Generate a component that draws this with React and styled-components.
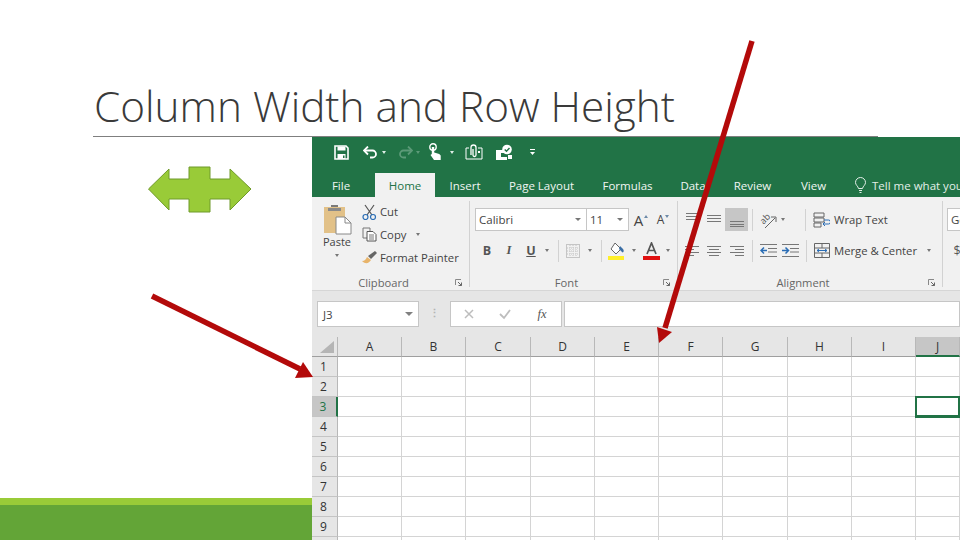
import React from 'react';
import styled, { createGlobalStyle } from 'styled-components';

const GlobalStyle = createGlobalStyle`
  html, body { margin: 0; padding: 0; background: #fff; }
  body { font-family: "Open Sans", "Liberation Sans", sans-serif; }
`;

const Page = styled.div`
  position: relative;
  width: 960px;
  height: 540px;
  overflow: hidden;
  background: #fff;
  display: flex;
  flex-direction: column;
`;

const TitleBar = styled.header`
  height: 137px;
  box-sizing: border-box;
  margin: 0 82px 0 93px;
  border-bottom: 1px solid #7f7f7f;
  display: flex;
  align-items: flex-end;
  flex-shrink: 0;
`;

const Title = styled.h1`
  margin: 0 0 2px 1px;
  font-weight: 300;
  font-size: 42.3px;
  line-height: 56px;
  color: #3a3a3a;
  white-space: nowrap;
`;

const Body = styled.div`
  flex: 1;
  display: flex;
  min-height: 0;
`;

const LeftPane = styled.div`
  width: 312px;
  display: flex;
  flex-direction: column;
  flex-shrink: 0;
`;

const ShapeWrap = styled.div`
  margin: 29px 0 0 147px;
  line-height: 0;
`;

const FooterBand = styled.div`
  margin-top: auto;
  height: 35px;
  background: #63a537;
  border-top: 7px solid #99cb38;
`;

const Excel = styled.div`
  width: 648px;
  display: flex;
  flex-direction: column;
  overflow: hidden;
`;

const Qat = styled.div`
  height: 36px;
  box-sizing: border-box;
  background: #217346;
  display: flex;
  align-items: center;
  padding: 0 0 6px 21px;
  flex-shrink: 0;
`;

const QatSlot = styled.span`
  width: ${(p) => p.$w}px;
  height: 20px;
  margin-left: ${(p) => p.$ml || 0}px;
  display: flex;
  align-items: center;
  justify-content: center;
  flex-shrink: 0;
`;

const Tabs = styled.div`
  height: 24px;
  background: #217346;
  display: flex;
  flex-shrink: 0;
`;

const Tab = styled.div`
  width: ${(p) => p.$w}px;
  margin-right: ${(p) => p.$mr || 0}px;
  display: flex;
  align-items: center;
  justify-content: center;
  flex-shrink: 0;
  font-size: 11.5px;
  color: ${(p) => (p.$active ? '#217346' : '#f1f6f3')};
  background: ${(p) => (p.$active ? '#f1f1f1' : 'transparent')};
`;

const TellMe = styled.div`
  display: flex;
  align-items: center;
  margin-left: 13px;
  gap: 5px;
  font-size: 11.5px;
  color: #e3efe8;
  white-space: nowrap;
  flex-shrink: 0;
`;

const Ribbon = styled.div`
  height: 94px;
  box-sizing: border-box;
  background: #f1f1f1;
  border-bottom: 1px solid #d6d6d6;
  padding-top: 4px;
  display: flex;
  flex-shrink: 0;
  overflow: hidden;
`;

const Group = styled.section`
  width: ${(p) => p.$w}px;
  height: 86px;
  box-sizing: border-box;
  border-right: 1px solid #d2d2d2;
  display: flex;
  flex-direction: column;
  flex-shrink: 0;
`;

const GroupMain = styled.div`
  flex: 1;
  display: flex;
  min-height: 0;
`;

const Rows = styled.div`
  display: flex;
  flex-direction: column;
  gap: 8px;
  padding: 7px 0 0 ${(p) => p.$pl || 0}px;
`;

const ToolRow = styled.div`
  height: 23px;
  display: flex;
  align-items: center;
`;

const GroupFoot = styled.div`
  height: 14px;
  margin-bottom: -2px;
  display: flex;
  align-items: center;
  color: #666;
  font-size: 11.2px;
`;

const GroupName = styled.span`
  flex: 1;
  text-align: center;
`;

const Launcher = styled.span`
  width: 14px;
  line-height: 0;
`;

const PasteCol = styled.div`
  width: 50px;
  display: flex;
  flex-direction: column;
  align-items: center;
  font-size: 11px;
  color: #444;
  padding-top: 3px;
  line-height: 14px;
`;

const ClipList = styled.div`
  display: flex;
  flex-direction: column;
  margin-top: -1px;
`;

const ClipItem = styled.div`
  height: 23px;
  display: flex;
  align-items: center;
  font-size: 11.3px;
  color: #444;
  white-space: nowrap;
`;

const ClipIcon = styled.span`
  width: 18px;
  display: flex;
  justify-content: flex-start;
`;

const Combo = styled.div`
  width: ${(p) => p.$w}px;
  height: 23px;
  box-sizing: border-box;
  background: #fff;
  border: 1px solid #c6c6c6;
  margin-left: -1px;
  padding: 0 5px 0 3px;
  display: flex;
  align-items: center;
  justify-content: space-between;
  font-size: 11.5px;
  color: #444;
  flex-shrink: 0;
`;

const Slot = styled.span`
  width: ${(p) => p.$w}px;
  height: 23px;
  margin-left: ${(p) => p.$ml || 0}px;
  display: flex;
  align-items: center;
  justify-content: center;
  flex-shrink: 0;
  background: ${(p) => (p.$on ? '#c6c6c6' : 'transparent')};
  color: #555;
  font-size: 12.5px;
  font-weight: ${(p) => (p.$bold ? 700 : 400)};
  font-style: ${(p) => (p.$italic ? 'italic' : 'normal')};
  text-decoration: ${(p) => (p.$under ? 'underline' : 'none')};
  font-family: ${(p) => (p.$serif ? '"Liberation Serif", serif' : 'inherit')};
`;

const Caret = styled.span`
  width: 0;
  height: 0;
  margin: 0 ${(p) => p.$m ?? 2}px;
  border-left: ${(p) => p.$size ?? 2.5}px solid transparent;
  border-right: ${(p) => p.$size ?? 2.5}px solid transparent;
  border-top: ${(p) => (p.$size ?? 2.5) + 0.5}px solid ${(p) => p.$color || '#777'};
  flex-shrink: 0;
`;

const Sep = styled.span`
  width: 1px;
  height: 22px;
  margin-left: ${(p) => p.$ml || 0}px;
  background: #d2d2d2;
  flex-shrink: 0;
`;

const WideButton = styled.div`
  margin-left: 7px;
  display: flex;
  align-items: center;
  gap: 4px;
  font-size: 11.3px;
  color: #444;
  white-space: nowrap;
`;

const SizeLetter = styled.span`
  font-size: ${(p) => p.$size}px;
  color: #444;
`;

const SizeMark = styled.span`
  width: 0;
  height: 0;
  margin: 0 0 7px 1px;
  border-left: 2.5px solid transparent;
  border-right: 2.5px solid transparent;
  border-bottom: ${(p) => (p.$down ? '0' : '3px solid #6d8aa8')};
  border-top: ${(p) => (p.$down ? '3px solid #6d8aa8' : '0')};
`;

const FormulaBar = styled.div`
  height: 46px;
  box-sizing: border-box;
  background: #e6e6e6;
  padding: 10px 0 10px 5px;
  display: flex;
  flex-shrink: 0;
`;

const BarBox = styled.div`
  width: ${(p) => (p.$w ? `${p.$w}px` : 'auto')};
  flex: ${(p) => (p.$w ? '0 0 auto' : '1')};
  margin-left: ${(p) => p.$ml || 0}px;
  box-sizing: border-box;
  background: #fff;
  border: 1px solid #c6c6c6;
  display: flex;
  align-items: center;
  justify-content: space-between;
  padding: 0 ${(p) => p.$pr || 0}px 0 ${(p) => p.$pl || 0}px;
  font-size: 11.5px;
  color: #444;
`;

const Dots = styled.span`
  width: 31px;
  text-align: center;
  color: #b4b4b4;
  font-size: 11px;
  line-height: 24px;
  font-weight: 700;
`;

const Sheet = styled.div`
  display: grid;
  grid-template-columns: 26px 64px 64px 65px 64px 64px 64px 65px 64px 64px 1fr;
  grid-auto-rows: 20px;
  flex: 1;
  min-height: 0;
`;

const Corner = styled.div`
  background: #e6e6e6;
  border-right: 1px solid #b8b8b8;
  border-bottom: 1px solid #9f9f9f;
  box-sizing: border-box;
  display: flex;
  align-items: flex-end;
  justify-content: flex-end;
  padding: 0 3px 3px 0;
`;

const ColHead = styled.div`
  box-sizing: border-box;
  background: ${(p) => (p.$on ? '#c6c6c6' : '#e6e6e6')};
  border-right: 1px solid #b8b8b8;
  border-bottom: ${(p) => (p.$on ? '2px solid #217346' : '1px solid #9f9f9f')};
  display: flex;
  align-items: center;
  justify-content: center;
  font-size: 12px;
  color: #333;
`;

const RowHead = styled.div`
  box-sizing: border-box;
  background: ${(p) => (p.$on ? '#c6c6c6' : '#e6e6e6')};
  border-right: ${(p) => (p.$on ? '2px solid #217346' : '1px solid #b8b8b8')};
  border-bottom: 1px solid #c4c4c4;
  display: flex;
  align-items: center;
  justify-content: center;
  padding-right: 2px;
  font-size: 12px;
  color: ${(p) => (p.$on ? '#217346' : '#333')};
`;

const Cell = styled.div`
  position: relative;
  z-index: ${(p) => (p.$on ? 1 : 0)};
  box-sizing: border-box;
  background: #fff;
  border-right: 1px solid ${(p) => (p.$on ? '#217346' : '#d4d4d4')};
  border-bottom: 1px solid ${(p) => (p.$on ? '#217346' : '#d4d4d4')};
  box-shadow: ${(p) => (p.$on ? 'inset 0 0 0 1px #217346, 0 0 0 1px #217346' : 'none')};
`;

const ArrowLayer = styled.svg`
  position: absolute;
  inset: 0;
  z-index: 2;
  pointer-events: none;
`;

const columns = ['A', 'B', 'C', 'D', 'E', 'F', 'G', 'H', 'I', 'J'];
const rows = [1, 2, 3, 4, 5, 6, 7, 8, 9, 10];

const Svg = ({ w = 16, h = 16, children, ...rest }) => (
  <svg width={w} height={h} viewBox={`0 0 ${w} ${h}`} fill="none" {...rest}>
    {children}
  </svg>
);

// alignment glyph, rows is a list of [x1, x2, y]
const Lines = ({ rows: lines, color = '#777' }) => (
  <Svg w={16} h={14}>
    {lines.map(([a, b, y]) => (
      <path key={`${a}-${y}`} d={`M${a} ${y + 0.5}H${b}`} stroke={color} />
    ))}
  </Svg>
);

const SaveIcon = () => (
  <Svg w={15} h={15}>
    <path d="M1 1h11l2 2v11H1z" stroke="#fff" strokeWidth="1.6" />
    <path d="M3.500 1.500h8v4h-8z" fill="#fff" />
    <path d="M3.500 9h8v5h-8z" fill="#fff" />
    <path d="M9 10.500h1.500V13H9z" fill="#217346" />
  </Svg>
);

const UndoIcon = ({ flip, color = '#fff' }) => (
  <Svg w={15} h={13} style={flip ? { transform: 'scaleX(-1)' } : undefined}>
    <path d="M1.500 4.500h8a3.500 3.500 0 0 1 0 7H7" stroke={color} strokeWidth="1.800" />
    <path d="M5 .5 1 4.500l4 4" stroke={color} strokeWidth="1.800" />
  </Svg>
);

const TouchIcon = () => (
  <Svg w={14} h={18}>
    <circle cx="5" cy="4" r="3.200" stroke="#fff" strokeWidth="1.400" />
    <path d="M3.800 4h2.400v5.500l5 1.500 1.500 1.500V17H6l-3.500-5 1.300-1z" fill="#fff" />
  </Svg>
);

const AttachIcon = () => (
  <Svg w={18} h={16}>
    <path d="M4 4H1v11h16V4h-4" stroke="#fff" />
    <path d="M6 11V3.500a2.500 2.500 0 0 1 5 0V11a1.500 1.500 0 0 1-3 0V5" stroke="#fff" strokeWidth="1.300" />
    <path d="M13 7h2v2h-2z" fill="#fff" />
  </Svg>
);

const ReviewIcon = () => (
  <Svg w={18} h={17}>
    <path d="M1 6h8v3H6v4h6v3H1z" fill="#fff" />
    <circle cx="12" cy="5.500" r="4.800" fill="#fff" />
    <path d="m9.700 5.500 1.800 1.800 3-3.300" stroke="#217346" strokeWidth="1.400" />
    <path d="M13 11h4v4h-4z" fill="#fff" />
  </Svg>
);

const CustomizeIcon = () => (
  <Svg w={7} h={8}>
    <path d="M1 1.500h5" stroke="#fff" />
    <path d="M1 4h5L3.500 7z" fill="#fff" />
  </Svg>
);

const BulbIcon = () => (
  <Svg w={13} h={16}>
    <path d="M4.500 11.500C4 9 1.500 8 1.500 5.500a5 5 0 0 1 10 0c0 2.500-2.500 3.500-3 6z" stroke="#e3efe8" />
    <path d="M5 13.500h3M5.500 15.500h2" stroke="#e3efe8" />
  </Svg>
);

const PasteIcon = () => (
  <Svg w={29} h={31}>
    <path d="M1 3h21v26H1z" fill="#e2c188" />
    <path d="M8 3h7V1H8z" fill="#7a7a7a" />
    <path d="M5 4h13v3H5z" fill="#8a8a8a" />
    <path d="M13 13h9l6 6v11H13z" fill="#fff" stroke="#888" />
    <path d="M22 13v6h6" stroke="#888" />
  </Svg>
);

const ScissorsIcon = () => (
  <Svg w={15} h={16}>
    <path d="M3 1l7 10M12 1 5 11" stroke="#555" strokeWidth="1.200" />
    <circle cx="3.500" cy="13" r="2.500" stroke="#2a6db5" strokeWidth="1.200" />
    <circle cx="11" cy="13" r="2.500" stroke="#2a6db5" strokeWidth="1.200" />
  </Svg>
);

const CopyIcon = () => (
  <Svg w={15} h={15}>
    <path d="M1 1h7v10H1z" fill="#f1f1f1" stroke="#777" />
    <path d="M5 4.500h6l3 3V14H5z" fill="#fff" stroke="#555" />
    <path d="M7 8h5M7 10h5M7 12h5" stroke="#777" />
  </Svg>
);

const BrushIcon = () => (
  <Svg w={16} h={14}>
    <path d="M0 10c3 0 4-2 5-4l4 3c-2 3-5 5-9 1z" fill="#e8b46a" />
    <path d="m6 5 3 3 6-6-2-2z" fill="#666" />
  </Svg>
);

const BordersIcon = () => (
  <Svg w={14} h={14}>
    <path d="M.5.5h13v13H.5z" stroke="#999" strokeDasharray="1 1" />
    <path d="M7 1v12M1 7h12M4 1v12M10 1v12M1 4h12M1 10h12" stroke="#c4c4c4" strokeDasharray="1 1" />
  </Svg>
);

const FillIcon = () => (
  <Svg w={17} h={18}>
    <path d="m7 1 6 6-5 5-5-5z" fill="#fff" stroke="#666" />
    <path d="M12 4l3 3c1 1 1 3-.5 3.500L11 7z" fill="#3a6ea5" />
    <path d="M0 14h16v4H0z" fill="#ffef2a" />
  </Svg>
);

const FontColorIcon = () => (
  <Svg w={17} h={18}>
    <path d="M0 14h17v4H0z" fill="#e01010" />
    <path d="m4 12 4.500-11L13 12M5.500 8.500h6" stroke="#555" strokeWidth="1.700" />
  </Svg>
);

const OrientIcon = () => (
  <Svg w={22} h={20} style={{ overflow: 'visible' }}>
    <text x="3" y="12" fontSize="9" fontFamily="Open Sans, sans-serif" fill="#555" transform="rotate(-45 8 9)">
      ab
    </text>
    <path d="M8 18 18 8M14 7h5v5" stroke="#666" />
  </Svg>
);

const WrapIcon = () => (
  <Svg w={17} h={16}>
    <path d="M1 1h10v4H1zM1 6h10v4H1zM1 11h7v4H1z" stroke="#666" />
    <path d="M11 8h4.500a1 1 0 0 1 0 4H10" stroke="#2a6db5" />
    <path d="M12 10 10 12l2 2" stroke="#2a6db5" />
  </Svg>
);

const MergeIcon = () => (
  <Svg w={16} h={15}>
    <path d="M.5.5h15v14H.5zM.5 5h15M.5 10h15M8 .5V5M8 10v4.500" stroke="#666" />
    <path d="M3 7.500h10M5 6 3 7.500 5 9M11 6l2 1.500L11 9" stroke="#2a6db5" />
  </Svg>
);

const IndentIcon = ({ out }) => (
  <Svg w={17} h={13}>
    <path d="M0 .5h17M8 4.500h9M8 8h9M0 12.500h17" stroke="#777" />
    <path
      d={out ? 'M1 6.500h6M4 3.500l-3 3 3 3' : 'M0 6.500h6M3.500 3.500l3 3-3 3'}
      stroke="#2a6db5"
      strokeWidth="1.500"
    />
  </Svg>
);

const LauncherIcon = () => (
  <Svg w={7} h={7}>
    <path d="M.5 6V.5H6" stroke="#888" />
    <path d="m3 3 3.500 3.500M6.500 3.500v3h-3" stroke="#666" />
  </Svg>
);

const ShapeIcon = () => (
  <svg width="105" height="48" viewBox="0 0 105 48">
    <path
      d="M1.500 23 22 3v10h20V1h21v12h20V3l21 20-21 21V33H63v13H42V33H22v11z"
      fill="#99cb38"
      stroke="#6f9a2a"
    />
  </svg>
);

const App = () => (
  <Page>
    <GlobalStyle />
    <TitleBar>
      <Title>Column Width and Row Height</Title>
    </TitleBar>
    <Body>
      <LeftPane>
        <ShapeWrap>
          <ShapeIcon />
        </ShapeWrap>
        <FooterBand />
      </LeftPane>
      <Excel>
        <Qat>
          <QatSlot $w={16}><SaveIcon /></QatSlot>
          <QatSlot $w={16} $ml={13}><UndoIcon /></QatSlot>
          <QatSlot $w={5} $ml={3.5}><Caret $m={0} $color="#dfeee6" /></QatSlot>
          <QatSlot $w={16} $ml={10.5}><UndoIcon flip color="#5c9a78" /></QatSlot>
          <QatSlot $w={5} $ml={2.5}><Caret $m={0} $color="#5c9a78" /></QatSlot>
          <QatSlot $w={14} $ml={7.5}><TouchIcon /></QatSlot>
          <QatSlot $w={5} $ml={7.5}><Caret $m={0} $color="#dfeee6" /></QatSlot>
          <QatSlot $w={18} $ml={10.5}><AttachIcon /></QatSlot>
          <QatSlot $w={18} $ml={12}><ReviewIcon /></QatSlot>
          <QatSlot $w={7} $ml={15.5}><CustomizeIcon /></QatSlot>
        </Qat>
        <Tabs>
          <Tab $w={58} $mr={5}>File</Tab>
          <Tab $w={60} $active>Home</Tab>
          <Tab $w={60}>Insert</Tab>
          <Tab $w={93}>Page Layout</Tab>
          <Tab $w={79}>Formulas</Tab>
          <Tab $w={52}>Data</Tab>
          <Tab $w={67}>Review</Tab>
          <Tab $w={55}>View</Tab>
          <TellMe><BulbIcon />Tell me what you want to do</TellMe>
        </Tabs>
        <Ribbon>
          <Group $w={158}>
            <GroupMain>
              <PasteCol>
                <PasteIcon />
                <span>Paste</span>
                <Caret style={{ marginTop: 5 }} />
              </PasteCol>
              <ClipList>
                <ClipItem><ClipIcon><ScissorsIcon /></ClipIcon>Cut</ClipItem>
                <ClipItem><ClipIcon><CopyIcon /></ClipIcon>Copy<Caret $m={10} /></ClipItem>
                <ClipItem><ClipIcon><BrushIcon /></ClipIcon>Format Painter</ClipItem>
              </ClipList>
            </GroupMain>
            <GroupFoot>
              <GroupName>Clipboard</GroupName>
              <Launcher><LauncherIcon /></Launcher>
            </GroupFoot>
          </Group>
          <Group $w={208}>
            <GroupMain>
              <Rows $pl={6}>
                <ToolRow>
                  <Combo $w={112}>Calibri<Caret $m={0} $size={3} /></Combo>
                  <Combo $w={43}>11<Caret $m={0} $size={3} /></Combo>
                  <Slot $w={22} $ml={1}><SizeLetter $size={15}>A</SizeLetter><SizeMark /></Slot>
                  <Slot $w={22}><SizeLetter $size={12}>A</SizeLetter><SizeMark $down /></Slot>
                </ToolRow>
                <ToolRow>
                  <Slot $w={22} $bold>B</Slot>
                  <Slot $w={22} $italic $bold $serif>I</Slot>
                  <Slot $w={22} $under $bold>U</Slot>
                  <Slot $w={10}><Caret $m={0} /></Slot>
                  <Sep $ml={6} />
                  <Slot $w={27}><BordersIcon /></Slot>
                  <Slot $w={8}><Caret $m={0} /></Slot>
                  <Sep $ml={7} />
                  <Slot $w={28}><FillIcon /></Slot>
                  <Slot $w={8}><Caret $m={0} /></Slot>
                  <Slot $w={26}><FontColorIcon /></Slot>
                  <Slot $w={8}><Caret $m={0} /></Slot>
                </ToolRow>
              </Rows>
            </GroupMain>
            <GroupFoot>
              <GroupName>Font</GroupName>
              <Launcher><LauncherIcon /></Launcher>
            </GroupFoot>
          </Group>
          <Group $w={265}>
            <GroupMain>
              <Rows $pl={3}>
                <ToolRow>
                  <Slot $w={22}><Lines rows={[[2, 14, 0], [2, 14, 3], [2, 14, 6]]} /></Slot>
                  <Slot $w={22}><Lines rows={[[1, 15, 2], [1, 15, 5], [1, 15, 8]]} /></Slot>
                  <Slot $w={23} $on><Lines rows={[[1, 15, 8], [1, 15, 11], [1, 15, 13]]} /></Slot>
                  <Sep $ml={4} />
                  <Slot $w={26} $ml={2}><OrientIcon /></Slot>
                  <Caret $m={0} />
                  <Sep $ml={20} />
                  <WideButton><WrapIcon />Wrap Text</WideButton>
                </ToolRow>
                <ToolRow>
                  <Slot $w={22}><Lines rows={[[1, 15, 2], [1, 10, 5], [1, 15, 8], [1, 10, 11]]} /></Slot>
                  <Slot $w={22}><Lines rows={[[1, 15, 2], [3, 13, 5], [1, 15, 8], [3, 13, 11]]} /></Slot>
                  <Slot $w={23}><Lines rows={[[1, 15, 2], [6, 15, 5], [1, 15, 8], [6, 15, 11]]} /></Slot>
                  <Sep $ml={4} />
                  <Slot $w={22} $ml={4}><IndentIcon out /></Slot>
                  <Slot $w={22}><IndentIcon /></Slot>
                  <Sep $ml={5} />
                  <WideButton><MergeIcon />Merge &amp; Center<Caret $m={6} /></WideButton>
                </ToolRow>
              </Rows>
            </GroupMain>
            <GroupFoot>
              <GroupName>Alignment</GroupName>
              <Launcher><LauncherIcon /></Launcher>
            </GroupFoot>
          </Group>
          <Rows $pl={5}>
            <ToolRow><Combo $w={60}>General</Combo></ToolRow>
            <ToolRow><Slot $w={14} $ml={2}>$</Slot></ToolRow>
          </Rows>
        </Ribbon>
        <FormulaBar>
          <BarBox $w={102} $pl={5} $pr={5}>J3<Caret $m={0} $size={4} $color="#808080" /></BarBox>
          <Dots>⋮</Dots>
          <BarBox $w={112} $pl={12} $pr={12}>
            <Svg w={12} h={12}><path d="m2 2 8 8M10 2l-8 8" stroke="#bdbdbd" strokeWidth="1.500" /></Svg>
            <Svg w={14} h={12}><path d="m2 6 4 4 6-8" stroke="#bdbdbd" strokeWidth="1.800" /></Svg>
            <Slot $w={14} $italic $serif>fx</Slot>
          </BarBox>
          <BarBox $ml={2} />
        </FormulaBar>
        <Sheet>
          <Corner>
            <Svg w={14} h={12}><path d="M14 0v12H0z" fill="#b5b5b5" /></Svg>
          </Corner>
          {columns.map((c) => (
            <ColHead key={c} $on={c === 'J'}>{c}</ColHead>
          ))}
          {rows.map((r) => (
            <React.Fragment key={r}>
              {/* row 10 sits below the fold, only its top edge shows */}
              <RowHead $on={r === 3}>{r < 10 ? r : ''}</RowHead>
              {columns.map((c) => (
                <Cell key={c} $on={r === 3 && c === 'J'} />
              ))}
            </React.Fragment>
          ))}
        </Sheet>
      </Excel>
    </Body>
    <ArrowLayer width="960" height="540" viewBox="0 0 960 540">
      <path d="M752 41 665 328" stroke="#b30a0a" strokeWidth="5.500" />
      <path d="M659 343 657 327 672 332z" fill="#b30a0a" />
      <path d="M152 296 300 369" stroke="#b30a0a" strokeWidth="5.500" />
      <path d="M313 377 303 362 295 378z" fill="#b30a0a" />
    </ArrowLayer>
  </Page>
);

export default App;
